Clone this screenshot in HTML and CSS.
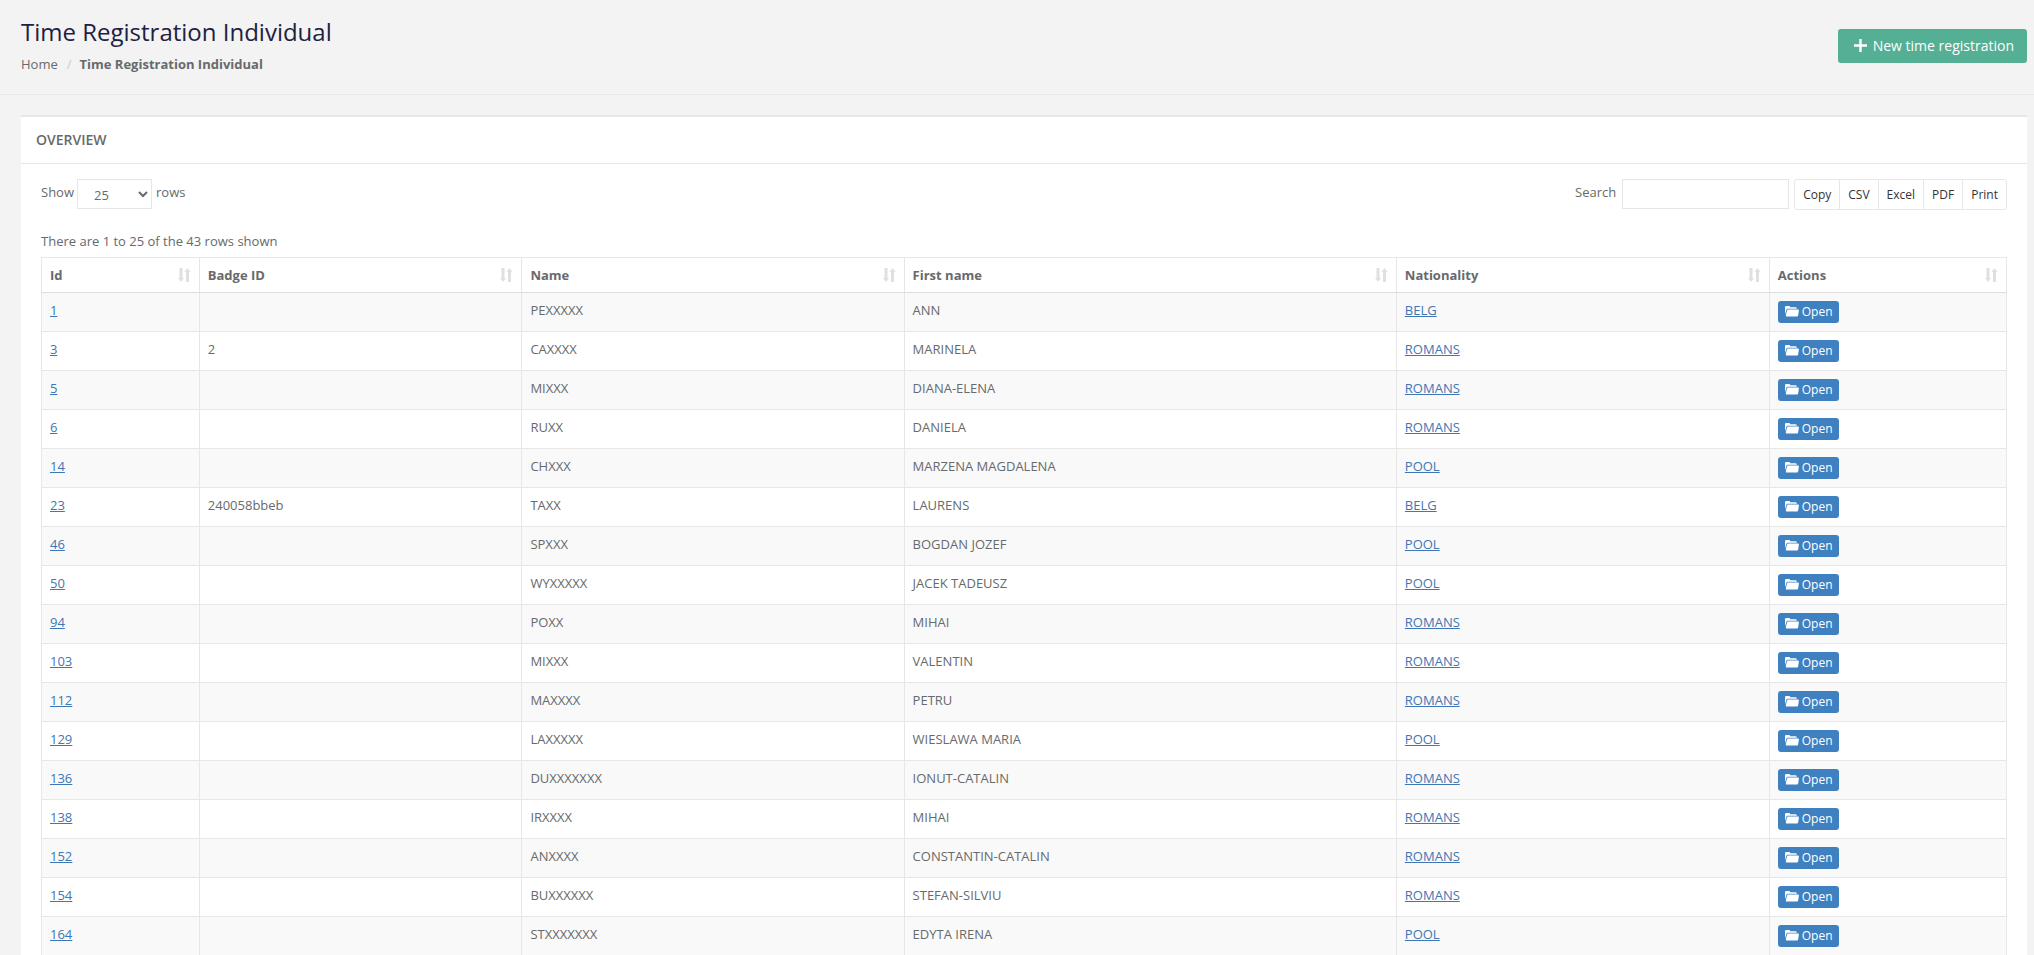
FILE: index.html
```html
<!DOCTYPE html>
<html lang="en">
<head>
<title>Time Registration Individual</title>
<meta charset="utf-8">
<link rel="stylesheet" href="styles.css">
</head>
<body>
<svg class="sprite" aria-hidden="true">
	<symbol id="i-sort" viewBox="0 0 13 14">
		<path d="M1.500 0h3v10H6L3 14 0 10h1.500zM8 14h3V4h1.500L9.500 0 6.500 4H8z"/>
	</symbol>
	<symbol id="i-open" viewBox="0 0 14 11">
		<path d="M0 8.500V1.200Q0 0 1.200 0H4Q5 0 5.300 1.200H10.500Q12 1.200 12 2.700H3Q1.600 2.700 1.300 4ZM.8 9.500 1.900 4.700Q2.100 3.500 3.300 3.500H13.200Q14 3.500 13.900 4.400L13.200 9.300Q13 10.500 12 10.500H1.600Q.6 10.500 .8 9.500Z"/>
	</symbol>
</svg>
<header class="page-heading">
	<div>
		<h2>Time Registration Individual</h2>
		<ol class="breadcrumb">
			<li><a href="#">Home</a></li>
			<li class="active"><strong>Time Registration Individual</strong></li>
		</ol>
	</div>
	<button type="button" class="btn btn-primary"><svg class="i-plus" viewBox="0 0 13 13"><path d="M5.300 0h2.400v5.300H13v2.400H7.700V13H5.300V7.700H0V5.300h5.300z"/></svg>New time registration</button>
</header>
<main class="ibox">
	<div class="ibox-title"><h5>Overview</h5></div>
	<div class="ibox-content">
		<div class="toolbar">
			<div class="length">
				<label for="length">Show</label>
				<select id="length"><option>10</option><option selected>25</option><option>50</option><option>100</option></select>
				<span>rows</span>
			</div>
			<div class="tools">
				<label for="search">Search</label>
				<input type="search" id="search">
				<div class="btn-group">
					<button type="button">Copy</button>
					<button type="button">CSV</button>
					<button type="button">Excel</button>
					<button type="button">PDF</button>
					<button type="button">Print</button>
				</div>
			</div>
		</div>
		<p class="info">There are 1 to 25 of the 43 rows shown</p>
		<table class="table">
			<colgroup><col class="c-id"><col class="c-badge"><col class="c-name"><col class="c-first"><col class="c-nat"><col class="c-act"></colgroup>
			<thead>
				<tr></tr>
			</thead>
			<tbody></tbody>
		</table>
	</div>
</main>
<script src="table.js"></script>
</body>
</html>
```

FILE: styles.css
```css
* { box-sizing: border-box; }
body, h2, h5, ol, p { margin: 0; padding: 0; }
body { font-family: "Open Sans", "Liberation Sans", sans-serif; font-size: 13px; line-height: 18px; color: #676a6c; background: #f3f3f3; }
li { list-style: none; }
button, input, select { font-family: inherit; color: inherit; outline: none; }
button { cursor: pointer; }
svg { fill: currentColor; }
.sprite { display: none; }

/* heading */
.page-heading { display: flex; justify-content: space-between; align-items: flex-start; padding: 19px 7px 21px 21px; border-bottom: 1px solid #e7e7e7; }
.page-heading h2 { font-size: 24px; line-height: 26px; font-weight: 400; color: #1e2142; margin-bottom: 10px; }
.breadcrumb { display: flex; }
.breadcrumb a { color: inherit; text-decoration: none; }
.breadcrumb li + li:before { content: "/"; padding: 0 8px 0 9px; color: #ccc; }
.btn { display: inline-flex; align-items: center; border: 0; border-radius: 3px; color: #fff; text-decoration: none; white-space: nowrap; }
.btn-primary { margin-top: 10px; height: 34px; padding: 0 13px 2px 16px; gap: 6px; font-size: 14px; background: #54af94; }
.i-plus { width: 13px; height: 13px; }

/* panel */
.ibox { margin: 20px 7px 0 21px; background: #fff; border-top: 2px solid #e7e7e7; }
.ibox-title { padding: 14px 15px; border-bottom: 1px solid #e7e7e7; }
.ibox-title h5 { font-size: 14px; line-height: 18px; font-weight: 600; text-transform: uppercase; }
.ibox-content { padding: 15px 20px 0; }
.toolbar { display: flex; justify-content: space-between; margin-bottom: 22px; }
.length, .tools { display: flex; line-height: 26px; }
.length select { width: 75px; height: 30px; margin: 0 4px 0 3px; padding: 2px 0 0 12px; font-size: 13px; background: #fff; border: 1px solid #e5e6e7; border-radius: 0; }
.tools input { width: 167px; height: 30px; margin: 0 5px 0 6px; border: 1px solid #e5e6e7; }
.btn-group { display: flex; }
.btn-group button { height: 31px; padding: 0 8px; font-size: 12px; color: #333; background: #fff; border: 1px solid #e7e7e7; }
.btn-group button + button { margin-left: -1px; }
.btn-group button:first-child { border-radius: 3px 0 0 3px; }
.btn-group button:last-child { border-radius: 0 3px 3px 0; }
.info { margin-bottom: 7px; }

/* table */
.table { width: 100%; table-layout: fixed; border-collapse: collapse; }
.table th, .table td { padding: 8px; text-align: left; vertical-align: top; border: 1px solid #e7e7e7; }
.table th { border-bottom-color: #ddd; }
.table tbody tr:nth-child(odd) { background: #f9f9f9; }
.table td a { color: #3f76b5; }
.th { display: flex; justify-content: space-between; }
.th svg { width: 13px; height: 14px; margin-top: 2px; color: #e0e0e0; }
.c-id { width: 8.03%; }
.c-badge { width: 16.42%; }
.c-name { width: 19.45%; }
.c-first { width: 25.05%; }
.c-nat { width: 18.98%; }
.table .btn-xs { display: flex; width: max-content; height: 22px; padding: 0 6px 0 7px; gap: 3px; font-size: 12px; color: #fff; background: #3f80c1; }
.btn-xs svg { width: 14px; height: 11px; margin-bottom: 1px; }
```

FILE: table.js
```js
var heads = ['Id', 'Badge ID', 'Name', 'First name', 'Nationality', 'Actions'];
var rows = [
	[1, '', 'PEXXXXX', 'ANN', 'BELG'],
	[3, '2', 'CAXXXX', 'MARINELA', 'ROMANS'],
	[5, '', 'MIXXX', 'DIANA-ELENA', 'ROMANS'],
	[6, '', 'RUXX', 'DANIELA', 'ROMANS'],
	[14, '', 'CHXXX', 'MARZENA MAGDALENA', 'POOL'],
	[23, '240058bbeb', 'TAXX', 'LAURENS', 'BELG'],
	[46, '', 'SPXXX', 'BOGDAN JOZEF', 'POOL'],
	[50, '', 'WYXXXXX', 'JACEK TADEUSZ', 'POOL'],
	[94, '', 'POXX', 'MIHAI', 'ROMANS'],
	[103, '', 'MIXXX', 'VALENTIN', 'ROMANS'],
	[112, '', 'MAXXXX', 'PETRU', 'ROMANS'],
	[129, '', 'LAXXXXX', 'WIESLAWA MARIA', 'POOL'],
	[136, '', 'DUXXXXXXX', 'IONUT-CATALIN', 'ROMANS'],
	[138, '', 'IRXXXX', 'MIHAI', 'ROMANS'],
	[152, '', 'ANXXXX', 'CONSTANTIN-CATALIN', 'ROMANS'],
	[154, '', 'BUXXXXXX', 'STEFAN-SILVIU', 'ROMANS'],
	[164, '', 'STXXXXXXX', 'EDYTA IRENA', 'POOL']
];
document.querySelector('.table thead tr').innerHTML = heads.map(function (h) {
	return '<th><div class="th">' + h + '<svg><use href="#i-sort"/></svg></div></th>';
}).join('');
document.querySelector('.table tbody').innerHTML = rows.map(function (r) {
	return '<tr><td><a href="#">' + r[0] + '</a></td><td>' + r[1] + '</td><td>' + r[2] + '</td><td>' + r[3] +
		'</td><td><a href="#">' + r[4] + '</a></td><td><a href="#" class="btn btn-xs"><svg><use href="#i-open"/></svg>Open</a></td></tr>';
}).join('');
```
